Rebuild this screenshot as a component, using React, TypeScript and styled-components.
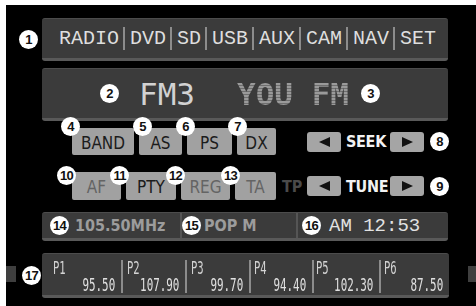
import styled, { createGlobalStyle } from 'styled-components';

const GlobalStyle = createGlobalStyle`
    html, body {
        margin: 0;
        background: #ffffff;
    }
`;

const Page = styled.div`
    width: 476px;
    height: 306px;
    box-sizing: border-box;
    padding: 5px 0 0 6px;
    background: #ffffff;
`;

const Screen = styled.div`
    height: 100%;
    background: #000000;
    display: flex;
    flex-direction: column;
    padding-top: 13px;
    box-sizing: border-box;
`;

const Section = styled.div<{ $top?: number }>`
    position: relative;
    margin: ${({ $top = 0 }) => $top}px 28px 0 36px;
`;

const Panel = styled.div`
    box-sizing: border-box;
    background: #3b3b3b;
    border-top: 1px solid #4c4c4c;
    border-bottom: 3px solid #595959;
    border-radius: 3px;
`;

const Callout = styled.span`
    display: inline-flex;
    align-items: center;
    justify-content: center;
    flex: none;
    width: 19px;
    height: 19px;
    border-radius: 50%;
    background: #ffffff;
    color: #111111;
    font: bold 13px 'Liberation Sans', Arial, sans-serif;
    letter-spacing: -0.8px;
`;

const Pin = styled(Callout)<{ $x: number; $y: number }>`
    position: absolute;
    left: ${({ $x }) => $x}px;
    top: ${({ $y }) => $y}px;
    z-index: 2;
`;

/* source tabs */
const SourceBar = styled(Panel)`
    height: 43px;
    display: flex;
    align-items: center;
    padding-left: 12px;
`;

const Source = styled.span`
    line-height: 30px;
    padding: 0 4px 0 5px;
    font: 20px 'Liberation Mono', monospace;
    color: #dedede;
    & + & {
        border-left: 2px solid #8c8c8c;
    }
`;

/* station display */
const Display = styled(Panel)`
    height: 53px;
    display: flex;
    align-items: center;
    padding-left: 58px;
    gap: 20px;
`;

const Band = styled.span`
    font: 31px 'DejaVu Sans Mono', monospace;
    color: #d2d2d2;
    margin-right: 22px;
`;

const StationName = styled.span`
    font: bold 31px 'DejaVu Sans Mono', monospace;
    background: repeating-linear-gradient(0deg, #9a9a9a 0 2px, #6e6e6e 2px 3px);
    -webkit-background-clip: text;
    background-clip: text;
    color: transparent;
    margin-right: -8px;
`;

/* buttons */
const Controls = styled.div`
    margin: 7px 27px 0 66px;
    display: flex;
    flex-direction: column;
    gap: 17px;
`;

const ControlRow = styled.div<{ $h: number }>`
    height: ${({ $h }) => $h}px;
    display: flex;
    align-items: center;
    justify-content: space-between;
`;

const KeyGroup = styled.div`
    display: flex;
    align-items: center;
    height: 100%;
    gap: 5px;
`;

const Key = styled.span<{ $w: number; $dim?: boolean }>`
    position: relative;
    box-sizing: border-box;
    width: ${({ $w }) => $w}px;
    height: 100%;
    display: flex;
    align-items: center;
    justify-content: center;
    padding-top: 2px;
    background: #a1a1a1;
    border-radius: 2px;
    color: ${({ $dim }) => ($dim ? '#646464' : '#1c1c1c')};
    font: 17px 'DejaVu Sans Condensed', 'DejaVu Sans', sans-serif;
    font-stretch: condensed;
`;

const Flag = styled.span`
    margin-left: 1px;
    color: #4a4a4a;
    font: bold 16px 'DejaVu Sans Condensed', 'DejaVu Sans', sans-serif;
    font-stretch: condensed;
`;

const Stepper = styled.div`
    display: flex;
    align-items: center;
    gap: 5px;
`;

const ArrowKey = styled.span`
    width: 34px;
    height: 20px;
    display: flex;
    align-items: center;
    justify-content: center;
    background: #a5a5a5;
    border-radius: 3px;
`;

const StepLabel = styled.span`
    width: 39px;
    text-align: center;
    color: #f2f2f2;
    font: bold 16px 'DejaVu Sans Condensed', 'DejaVu Sans', sans-serif;
    font-stretch: condensed;
    letter-spacing: -0.3px;
`;

/* info strip */
const InfoBar = styled(Panel)`
    height: 29px;
    display: grid;
    grid-template-columns: 138px 116px 1fr;
`;

const InfoCell = styled.div<{ $pad: number; $gap: number }>`
    display: flex;
    align-items: center;
    gap: ${({ $gap }) => $gap}px;
    padding-left: ${({ $pad }) => $pad}px;
    & + & {
        border-left: 2px solid #555555;
    }
`;

const InfoText = styled.span`
    color: #9c9c9c;
    font: bold 16px 'DejaVu Sans Condensed', 'DejaVu Sans', sans-serif;
    font-stretch: condensed;
`;

const Clock = styled.span`
    color: #e2e2e2;
    font: 19px 'Liberation Mono', monospace;
    white-space: pre;
`;

/* presets */
const PresetRow = styled.div`
    margin-top: 12px;
    height: 45px;
    display: flex;
    align-items: center;
`;

const SideTab = styled.span<{ $w: number; $gap: string }>`
    width: ${({ $w }) => $w}px;
    height: 16px;
    margin: ${({ $gap }) => $gap};
    margin-top: -3px;
    background: #3f3f3f;
`;

const PresetBar = styled(Panel)`
    position: relative;
    width: 407px;
    height: 45px;
    display: grid;
    grid-template-columns: 79px 64px 64px 63px 67px 1fr;
`;

const Preset = styled.div<{ $pad: number }>`
    margin: 6px 0 5px;
    padding: 0 6px 0 ${({ $pad }) => $pad}px;
    display: flex;
    flex-direction: column;
    justify-content: space-between;
    & + & {
        border-left: 2px solid #8c8c8c;
    }
`;

const PresetLabel = styled.span`
    align-self: flex-start;
    display: inline-block;
    transform: scaleX(0.62);
    transform-origin: left;
    color: #d4d4d4;
    font: 17px 'DejaVu Sans Mono', monospace;
    line-height: 17px;
`;

const PresetFreq = styled.span`
    align-self: flex-end;
    display: inline-block;
    transform: scaleX(0.64);
    transform-origin: right;
    color: #e0e0e0;
    font: 17px 'DejaVu Sans Mono', monospace;
    line-height: 16px;
`;

const Arrow = ({ dir }: { dir: 'left' | 'right' }) => (
    <svg width="11" height="10" viewBox="0 0 11 10">
        <polygon
            points={dir === 'left' ? '11,0 11,10 0,5' : '0,0 0,10 11,5'}
            fill="#111"
        />
    </svg>
);

const sources = ['RADIO', 'DVD', 'SD', 'USB', 'AUX', 'CAM', 'NAV', 'SET'];

const presets = [
    { label: 'P1', freq: '95.50', pad: 11 },
    { label: 'P2', freq: '107.90', pad: 4 },
    { label: 'P3', freq: '99.70', pad: 4 },
    { label: 'P4', freq: '94.40', pad: 3 },
    { label: 'P5', freq: '102.30', pad: 2 },
    { label: 'P6', freq: '87.50', pad: 3 },
];

export default function App() {
    return (
        <Page>
            <GlobalStyle />
            <Screen>
                <Section>
                    <Pin $x={-23} $y={12}>1</Pin>
                    <SourceBar>
                        {sources.map((s) => (
                            <Source key={s}>{s}</Source>
                        ))}
                    </SourceBar>
                </Section>

                <Section $top={7}>
                    <Display>
                        <Callout>2</Callout>
                        <Band>FM3</Band>
                        <StationName>YOU FM</StationName>
                        <Callout>3</Callout>
                    </Display>
                </Section>

                <Controls>
                    <ControlRow $h={27}>
                        <KeyGroup>
                            <Key $w={62}>
                                <Pin $x={-11} $y={-11}>4</Pin>
                                BAND
                            </Key>
                            <Key $w={43}>
                                <Pin $x={-6} $y={-11}>5</Pin>
                                AS
                            </Key>
                            <Key $w={45}>
                                <Pin $x={-11} $y={-11}>6</Pin>
                                PS
                            </Key>
                            <Key $w={39}>
                                <Pin $x={-9} $y={-11}>7</Pin>
                                DX
                            </Key>
                        </KeyGroup>
                        <Stepper>
                            <ArrowKey>
                                <Arrow dir="left" />
                            </ArrowKey>
                            <StepLabel>SEEK</StepLabel>
                            <ArrowKey>
                                <Arrow dir="right" />
                            </ArrowKey>
                            <Callout style={{ marginLeft: 1 }}>8</Callout>
                        </Stepper>
                    </ControlRow>

                    <ControlRow $h={28}>
                        <KeyGroup>
                            <Key $w={49} $dim>
                                <Pin $x={-15} $y={-6}>10</Pin>
                                AF
                            </Key>
                            <Key $w={50}>
                                <Pin $x={-16} $y={-6}>11</Pin>
                                PTY
                            </Key>
                            <Key $w={49} $dim>
                                <Pin $x={-15} $y={-6}>12</Pin>
                                REG
                            </Key>
                            <Key $w={41} $dim>
                                <Pin $x={-14} $y={-6}>13</Pin>
                                TA
                            </Key>
                            <Flag>TP</Flag>
                        </KeyGroup>
                        <Stepper>
                            <ArrowKey>
                                <Arrow dir="left" />
                            </ArrowKey>
                            <StepLabel>TUNE</StepLabel>
                            <ArrowKey>
                                <Arrow dir="right" />
                            </ArrowKey>
                            <Callout style={{ marginLeft: 1 }}>9</Callout>
                        </Stepper>
                    </ControlRow>
                </Controls>

                <Section $top={12}>
                    <InfoBar>
                        <InfoCell $pad={8} $gap={6}>
                            <Callout>14</Callout>
                            <InfoText>105.50MHz</InfoText>
                        </InfoCell>
                        <InfoCell $pad={0} $gap={3}>
                            <Callout>15</Callout>
                            <InfoText>POP M</InfoText>
                        </InfoCell>
                        <InfoCell $pad={4} $gap={8}>
                            <Callout>16</Callout>
                            <Clock>AM 12:53</Clock>
                        </InfoCell>
                    </InfoBar>
                </Section>

                <PresetRow>
                    <SideTab $w={10} $gap="0 26px 0 0" />
                    <PresetBar>
                        <Pin $x={-20} $y={12}>17</Pin>
                        {presets.map((p) => (
                            <Preset key={p.label} $pad={p.pad}>
                                <PresetLabel>{p.label}</PresetLabel>
                                <PresetFreq>{p.freq}</PresetFreq>
                            </Preset>
                        ))}
                    </PresetBar>
                    <SideTab $w={8} $gap="0 0 0 19px" />
                </PresetRow>
            </Screen>
        </Page>
    );
}
